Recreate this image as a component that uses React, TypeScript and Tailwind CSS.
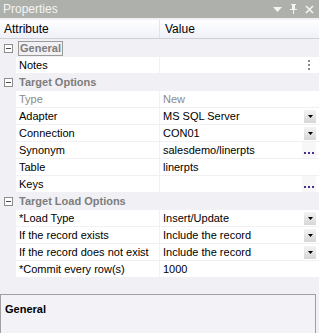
import { ReactNode } from "react";

type Row =
  | { kind: "cat"; label: string; focus?: boolean }
  | {
      kind: "prop";
      name: string;
      value?: string;
      muted?: boolean;
      btn?: "drop" | "dots" | "more";
    };

const rows: Row[] = [
  { kind: "cat", label: "General", focus: true },
  { kind: "prop", name: "Notes", btn: "more" },
  { kind: "cat", label: "Target Options" },
  { kind: "prop", name: "Type", value: "New", muted: true },
  { kind: "prop", name: "Adapter", value: "MS SQL Server", btn: "drop" },
  { kind: "prop", name: "Connection", value: "CON01", btn: "drop" },
  { kind: "prop", name: "Synonym", value: "salesdemo/linerpts", btn: "dots" },
  { kind: "prop", name: "Table", value: "linerpts" },
  { kind: "prop", name: "Keys", btn: "dots" },
  { kind: "cat", label: "Target Load Options" },
  { kind: "prop", name: "*Load Type", value: "Insert/Update", btn: "drop" },
  { kind: "prop", name: "If the record exists", value: "Include the record", btn: "drop" },
  { kind: "prop", name: "If the record does not exist", value: "Include the record", btn: "drop" },
  { kind: "prop", name: "*Commit every row(s)", value: "1000" },
];

const MinusBox = () => (
  <div className="flex h-[9px] w-[9px] items-center justify-center border border-[#8d8d8d] bg-white">
    <div className="h-px w-[5px] bg-[#4a4a4a]" />
  </div>
);

const DropBtn = () => (
  <div className="flex h-[13px] w-[12px] items-center justify-center bg-gradient-to-b from-[#f4f4f4] to-[#d6d6d6]">
    <svg width="5" height="3" viewBox="0 0 5 3">
      <path d="M0 0h5L2.5 3z" fill="#000" />
    </svg>
  </div>
);

const Dots = () => (
  <div className="flex h-[16px] w-[14px] items-end justify-center pb-[4px] bg-[#f7f7f7]">
    <span className="flex gap-[2px]">
      <i className="block h-[2px] w-[2px] bg-[#4b2f8a]" />
      <i className="block h-[2px] w-[2px] bg-[#4b2f8a]" />
      <i className="block h-[2px] w-[2px] bg-[#4b2f8a]" />
    </span>
  </div>
);

const More = () => (
  <div className="flex h-[16px] w-[14px] flex-col items-center justify-center gap-[2px]">
    <i className="block h-[2px] w-[2px] bg-[#8a8a8a]" />
    <i className="block h-[2px] w-[2px] bg-[#8a8a8a]" />
    <i className="block h-[2px] w-[2px] bg-[#8a8a8a]" />
  </div>
);

function Btn({ kind }: { kind?: "drop" | "dots" | "more" }): ReactNode {
  if (kind === "drop") return <DropBtn />;
  if (kind === "dots") return <Dots />;
  if (kind === "more") return <More />;
  return null;
}

export default function App() {
  return (
    <div
      className="flex h-[333px] w-[319px] flex-col bg-[#f1f0f4] text-[11px] text-black"
      style={{ fontFamily: "Tahoma, 'Liberation Sans', sans-serif" }}
    >
      {/* title bar */}
      <div className="flex h-[18px] items-center justify-between bg-[#aeb1ab] pl-[3px] pr-[5px] text-[12px] text-[#f4f4f4]">
        <span>Properties</span>
        <div className="flex items-center gap-[7px]">
          <svg width="9" height="5" viewBox="0 0 9 5">
            <path d="M0 0h9L4.5 5z" fill="#f4f4f4" />
          </svg>
          <svg width="9" height="10" viewBox="0 0 9 10">
            <path d="M2 0h5v1H6v4h2v1H5v4H4V6H1V5h2V1H2z" fill="#f4f4f4" />
          </svg>
          <svg width="9" height="9" viewBox="0 0 9 9">
            <path d="M1 1l7 7M8 1L1 8" stroke="#f4f4f4" strokeWidth="1.6" />
          </svg>
        </div>
      </div>

      {/* column header */}
      <div className="mt-[2px] flex h-[19px] items-center border-b border-[#cfcfd4] bg-gradient-to-b from-white to-[#eef1f8] text-[12px]">
        <div className="w-[160px] border-r border-[#e4e4e8] pl-[4px]">Attribute</div>
        <div className="pl-[5px]">Value</div>
      </div>

      {/* grid */}
      <div className="flex flex-col pt-[1px]">
        {rows.map((r, i) =>
          r.kind === "cat" ? (
            <div key={i} className="flex h-[17px] items-center">
              <div className="flex w-[16px] justify-center">
                <MinusBox />
              </div>
              <span
                className={
                  "ml-[2px] px-[1px] font-bold text-[#7d7d7d] " +
                  (r.focus ? "border border-[#9b9b9b] leading-[13px]" : "")
                }
              >
                {r.label}
              </span>
            </div>
          ) : (
            <div key={i} className="flex h-[17px] items-stretch">
              <div className="w-[16px]" />
              <div className="flex w-[143px] items-center border-b border-[#f1f0f4] bg-white pl-[3px]">
                <span className={r.muted ? "text-[#8a8a8a]" : ""}>{r.name}</span>
              </div>
              <div className="w-px bg-[#f1f0f4]" />
              <div className="flex flex-1 items-center border-b border-[#f1f0f4] bg-white pl-[3px] pr-[3px]">
                <span className={"flex-1 " + (r.muted ? "text-[#8a8a8a]" : "")}>{r.value}</span>
                <Btn kind={r.btn} />
              </div>
            </div>
          )
        )}
      </div>

      <div className="flex-1" />

      {/* description panel */}
      <div className="mb-[0px] mr-[3px] h-[39px] border border-b-0 border-[#a0a0a0] bg-[#f3f2f6] px-[4px] pt-[6px]">
        <span className="font-bold">General</span>
      </div>
    </div>
  );
}
